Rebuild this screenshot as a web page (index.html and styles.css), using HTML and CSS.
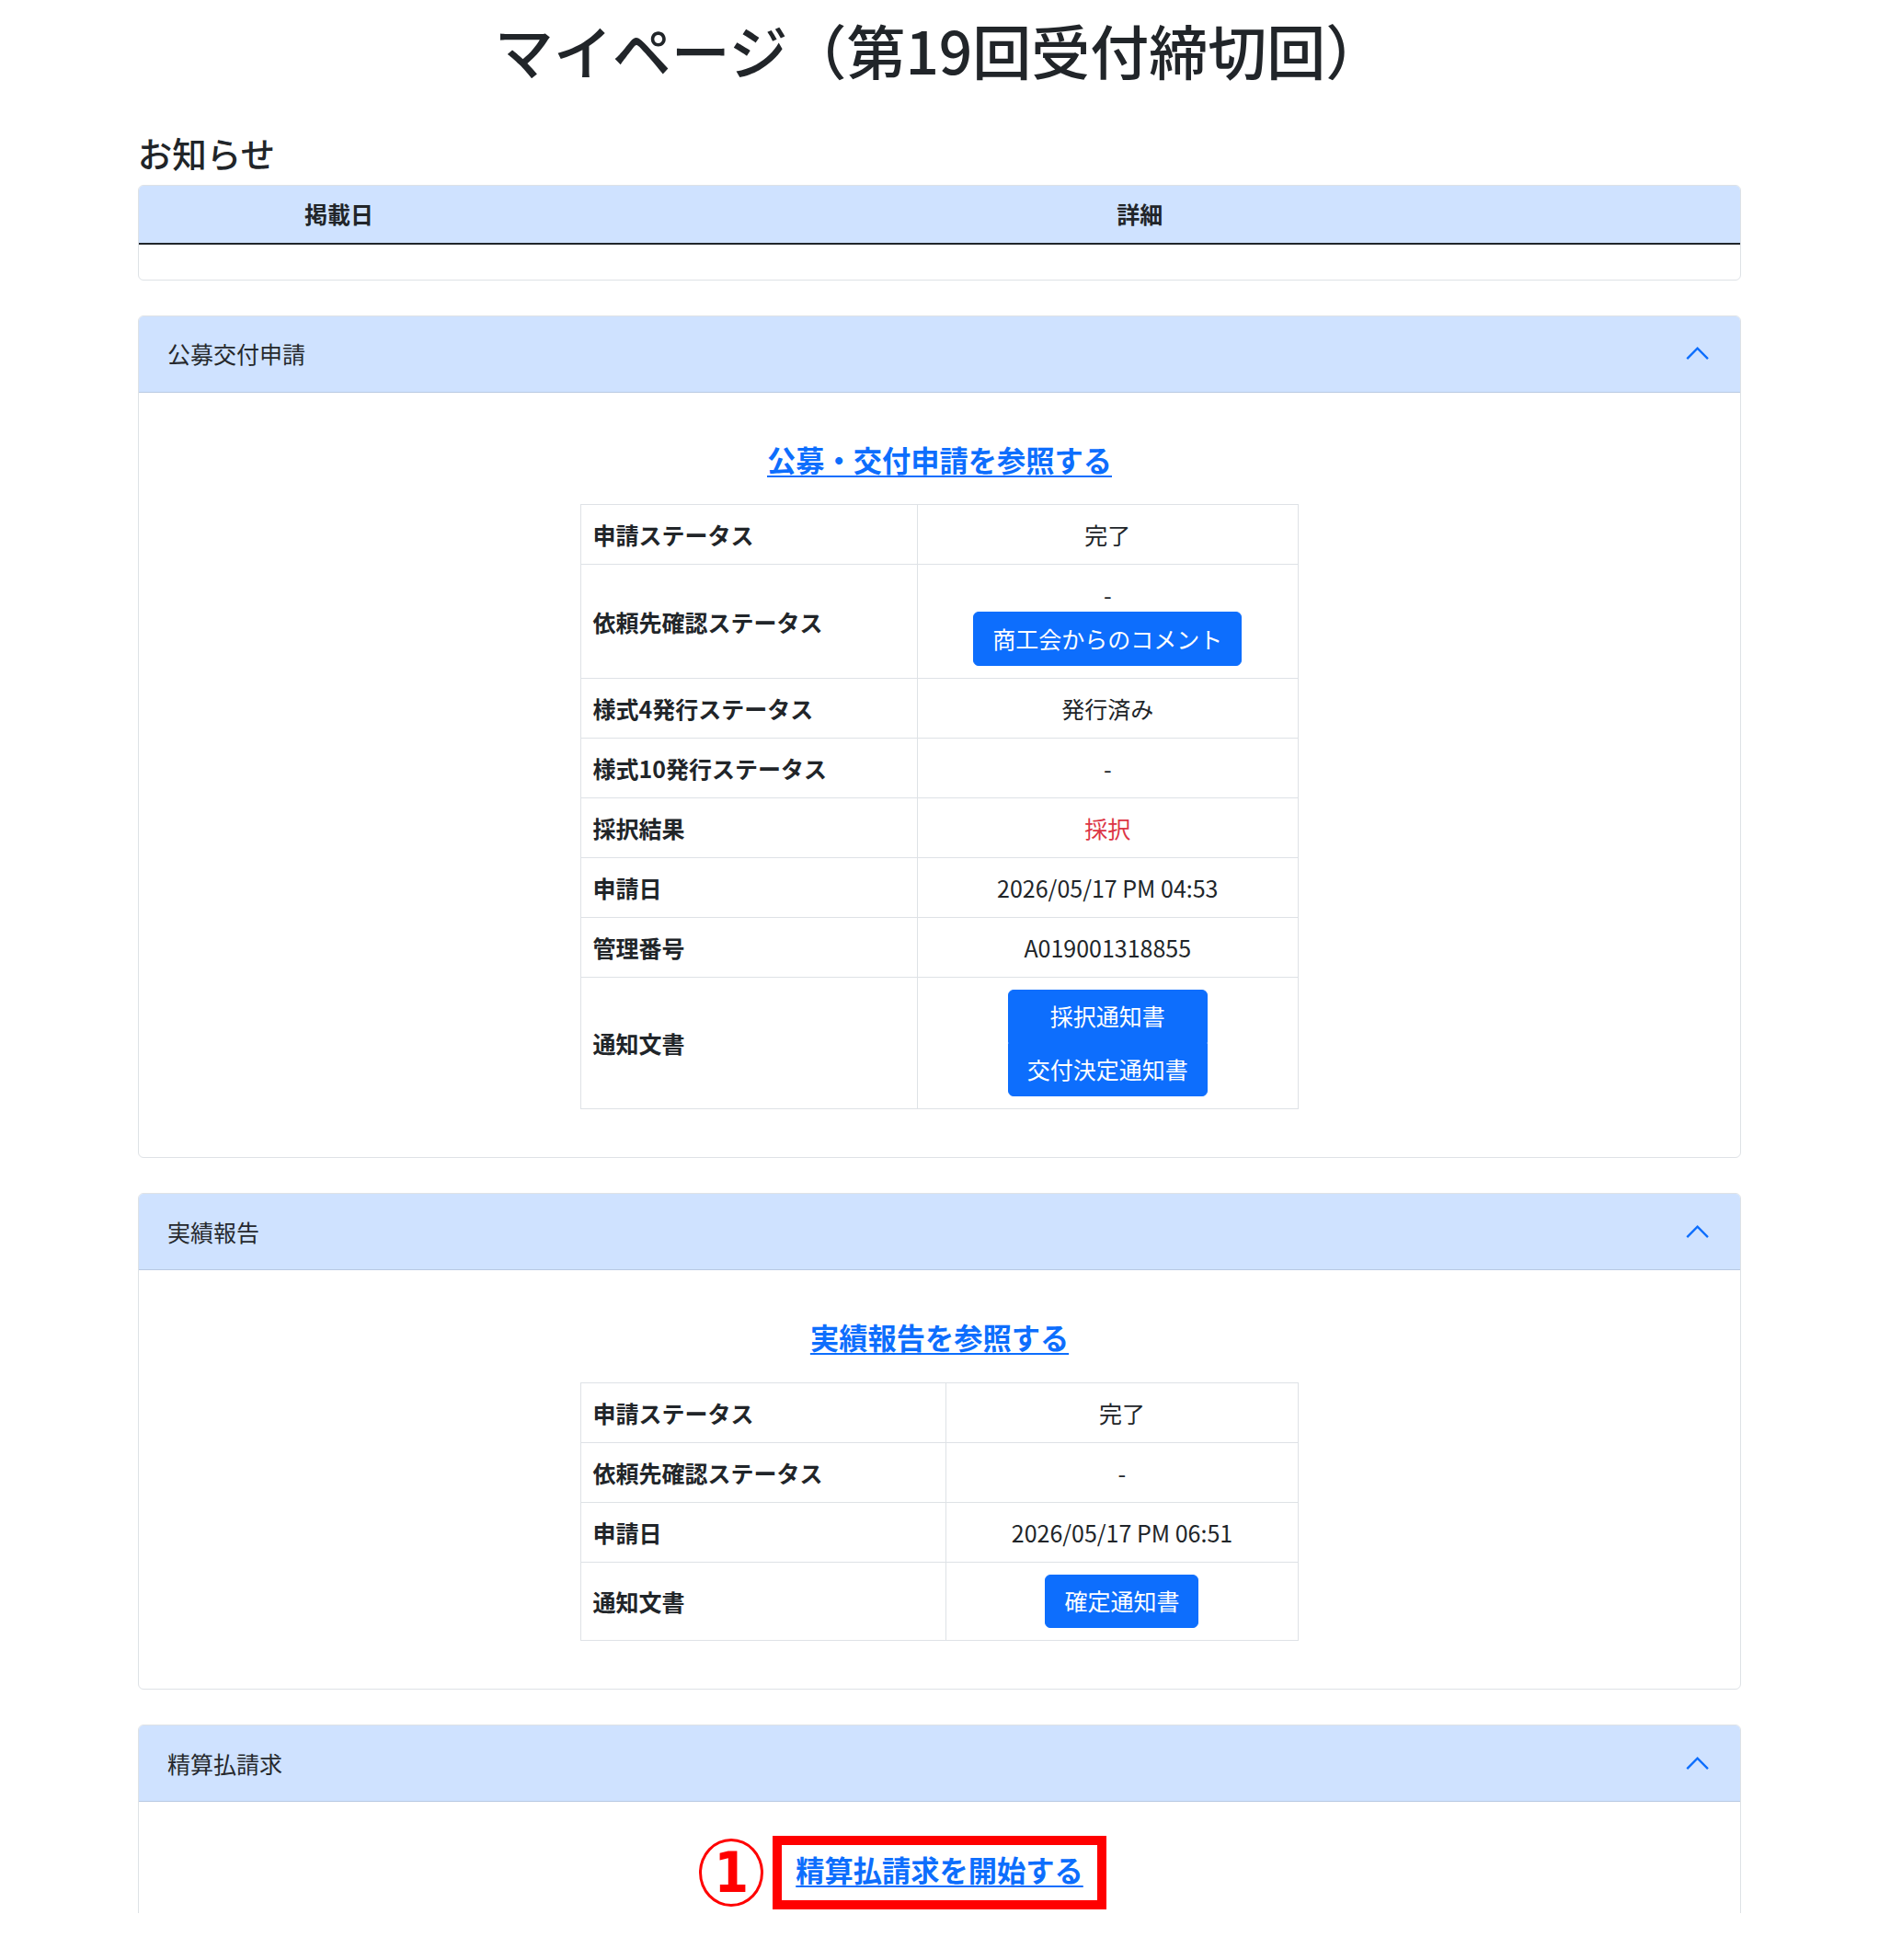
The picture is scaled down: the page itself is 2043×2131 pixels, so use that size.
FILE: index.html
```html
<!DOCTYPE html>
<html lang="ja">
<head>
    <meta charset="UTF-8">
    <meta name="viewport" content="width=device-width, initial-scale=1.0">
    <title>マイページ</title>
    <link rel="stylesheet" href="styles.css">
</head>
<body>
<div class="page">
    <div class="container">
        <h1 class="page-title">マイページ（第19回受付締切回）</h1>

        <!-- お知らせ -->
        <h4 class="section-title">お知らせ</h4>
        <div class="notice">
            <div class="notice-head">
                <div>掲載日</div>
                <div>詳細</div>
            </div>
            <div class="notice-body"></div>
        </div>

        <!-- 公募交付申請 -->
        <div class="panel">
            <div class="panel-header">
                <span>公募交付申請</span>
                <svg viewBox="0 0 16 16" fill="none"><path d="M2.2 10.8L8 5L13.8 10.8" stroke="#0d6efd" stroke-width="1.2"/></svg>
            </div>
            <div class="panel-body">
                <p class="panel-link"><a href="#">公募・交付申請を参照する</a></p>
                <table class="status-table">
                    <tr>
                        <th>申請ステータス</th>
                        <td>完了</td>
                    </tr>
                    <tr>
                        <th>依頼先確認ステータス</th>
                        <td>
                            <div>-</div>
                            <div class="btn-row"><button type="button" class="btn">商工会からのコメント</button></div>
                        </td>
                    </tr>
                    <tr>
                        <th>様式4発行ステータス</th>
                        <td>発行済み</td>
                    </tr>
                    <tr>
                        <th>様式10発行ステータス</th>
                        <td>-</td>
                    </tr>
                    <tr>
                        <th>採択結果</th>
                        <td class="text-danger">採択</td>
                    </tr>
                    <tr>
                        <th>申請日</th>
                        <td>2026/05/17 PM 04:53</td>
                    </tr>
                    <tr>
                        <th>管理番号</th>
                        <td>A019001318855</td>
                    </tr>
                    <tr>
                        <th>通知文書</th>
                        <td>
                            <div class="btn-row">
                                <div class="btn-stack">
                                    <button type="button" class="btn">採択通知書</button>
                                    <button type="button" class="btn">交付決定通知書</button>
                                </div>
                            </div>
                        </td>
                    </tr>
                </table>
            </div>
        </div>

        <!-- 実績報告 -->
        <div class="panel">
            <div class="panel-header">
                <span>実績報告</span>
                <svg viewBox="0 0 16 16" fill="none"><path d="M2.2 10.8L8 5L13.8 10.8" stroke="#0d6efd" stroke-width="1.2"/></svg>
            </div>
            <div class="panel-body">
                <p class="panel-link"><a href="#">実績報告を参照する</a></p>
                <table class="status-table">
                    <tr>
                        <th>申請ステータス</th>
                        <td>完了</td>
                    </tr>
                    <tr>
                        <th>依頼先確認ステータス</th>
                        <td>-</td>
                    </tr>
                    <tr>
                        <th>申請日</th>
                        <td>2026/05/17 PM 06:51</td>
                    </tr>
                    <tr>
                        <th>通知文書</th>
                        <td>
                            <div class="btn-row"><button type="button" class="btn">確定通知書</button></div>
                        </td>
                    </tr>
                </table>
            </div>
        </div>

        <!-- 精算払請求 -->
        <div class="panel">
            <div class="panel-header">
                <span>精算払請求</span>
                <svg viewBox="0 0 16 16" fill="none"><path d="M2.2 10.8L8 5L13.8 10.8" stroke="#0d6efd" stroke-width="1.2"/></svg>
            </div>
            <div class="panel-body">
                <div class="start-row">
                    <div class="start-box">
                        <span class="step-mark">1</span>
                        <a href="#">精算払請求を開始する</a>
                    </div>
                </div>
                <div class="panel-rest"></div>
            </div>
        </div>
    </div>
</div>
</body>
</html>
```

FILE: styles.css
```css
html {
    font-size: 25px;
}

body {
    margin: 0;
    background-color: #ffffff;
    color: #212529;
    font-family: "Noto Sans CJK JP", "Noto Sans", sans-serif;
    font-size: 1rem;
    line-height: 1.5;
}

/* the screenshot stops in the middle of the last card */
.page {
    height: 2080px;
    overflow: hidden;
}

.container {
    box-sizing: border-box;
    max-width: 1781px;
    margin: 0 auto;
    padding: 0 18.75px;
}

.page-title {
    margin: 16px 0 12.5px;
    font-size: 64px;
    font-weight: 500;
    line-height: 75px;
    text-align: center;
}

.section-title {
    margin: 52px 0 12.5px;
    font-size: 1.5rem;
    font-weight: 500;
    line-height: 1.2;
}

/* notice table */
.notice {
    margin-bottom: 38px;
    border: 1px solid #dee2e6;
    border-radius: 6px;
    overflow: hidden;
}

.notice-head {
    display: grid;
    grid-template-columns: 25% 75%;
    background-color: #cfe2ff;
    border-bottom: 2px solid #212529;
    font-weight: 700;
    text-align: center;
}

.notice-head div {
    padding: 12.5px;
}

.notice-body {
    height: 37.5px;
}

/* accordion panels */
.panel {
    margin-bottom: 38px;
    border: 1px solid #dee2e6;
    border-radius: 6px;
    overflow: hidden;
}

.panel-header {
    display: flex;
    align-items: center;
    justify-content: space-between;
    padding: 22.75px 31.25px;
    background-color: #cfe2ff;
    box-shadow: inset 0 -1px 0 #b8c9e2;
    color: #26292d;
    line-height: 37.5px;
}

.panel-header svg {
    width: 31.25px;
    height: 31.25px;
}

.panel-body {
    padding: 25px 31.25px;
}

.panel-link {
    margin: 25px 0;
    font-size: 1.25rem;
    font-weight: 700;
    line-height: 1.5;
    text-align: center;
}

a {
    color: #0d6efd;
    text-decoration: underline;
    text-decoration-thickness: 2px;
    text-underline-offset: 4px;
}

/* status tables */
.status-table {
    width: 781px;
    margin: 0 auto 27px;
    border-collapse: collapse;
    border: 1px solid #dee2e6;
}

.status-table th,
.status-table td {
    padding: 13px 12.5px;
    border: 1px solid #dee2e6;
    line-height: 38px;
    vertical-align: middle;
}

.status-table th {
    font-weight: 700;
    text-align: left;
}

.status-table td {
    text-align: center;
}

.text-danger {
    color: #dc3545;
}

.btn-row {
    display: flex;
    justify-content: center;
}

.btn {
    padding: 9.4px 20px;
    border: 1px solid #0d6efd;
    border-radius: 6px;
    background-color: #0d6efd;
    color: #ffffff;
    font-family: inherit;
    font-size: 1rem;
    line-height: 37.5px;
}

.btn-stack {
    display: flex;
    flex-direction: column;
}

.btn-stack .btn:first-child {
    border-bottom-left-radius: 0;
    border-bottom-right-radius: 0;
}

.btn-stack .btn:last-child {
    border-top-left-radius: 0;
    border-top-right-radius: 0;
}

/* red annotation around the start link */
.start-row {
    display: flex;
    justify-content: center;
    margin-top: 12px;
}

.start-box {
    position: relative;
    padding: 2.5px 15px 10.5px;
    border: 10px solid #ff0000;
    font-size: 1.25rem;
    font-weight: 700;
    line-height: 47px;
}

.step-mark {
    position: absolute;
    top: 50%;
    right: calc(100% + 20px);
    width: 64px;
    height: 68px;
    margin-top: -37px;
    border: 3px solid #ff0000;
    border-radius: 50%;
    color: #ff0000;
    font-family: "DejaVu Sans Condensed", "DejaVu Sans", sans-serif;
    font-size: 60px;
    font-weight: 700;
    line-height: 68px;
    text-align: center;
}

.panel-rest {
    height: 200px;
}
```
